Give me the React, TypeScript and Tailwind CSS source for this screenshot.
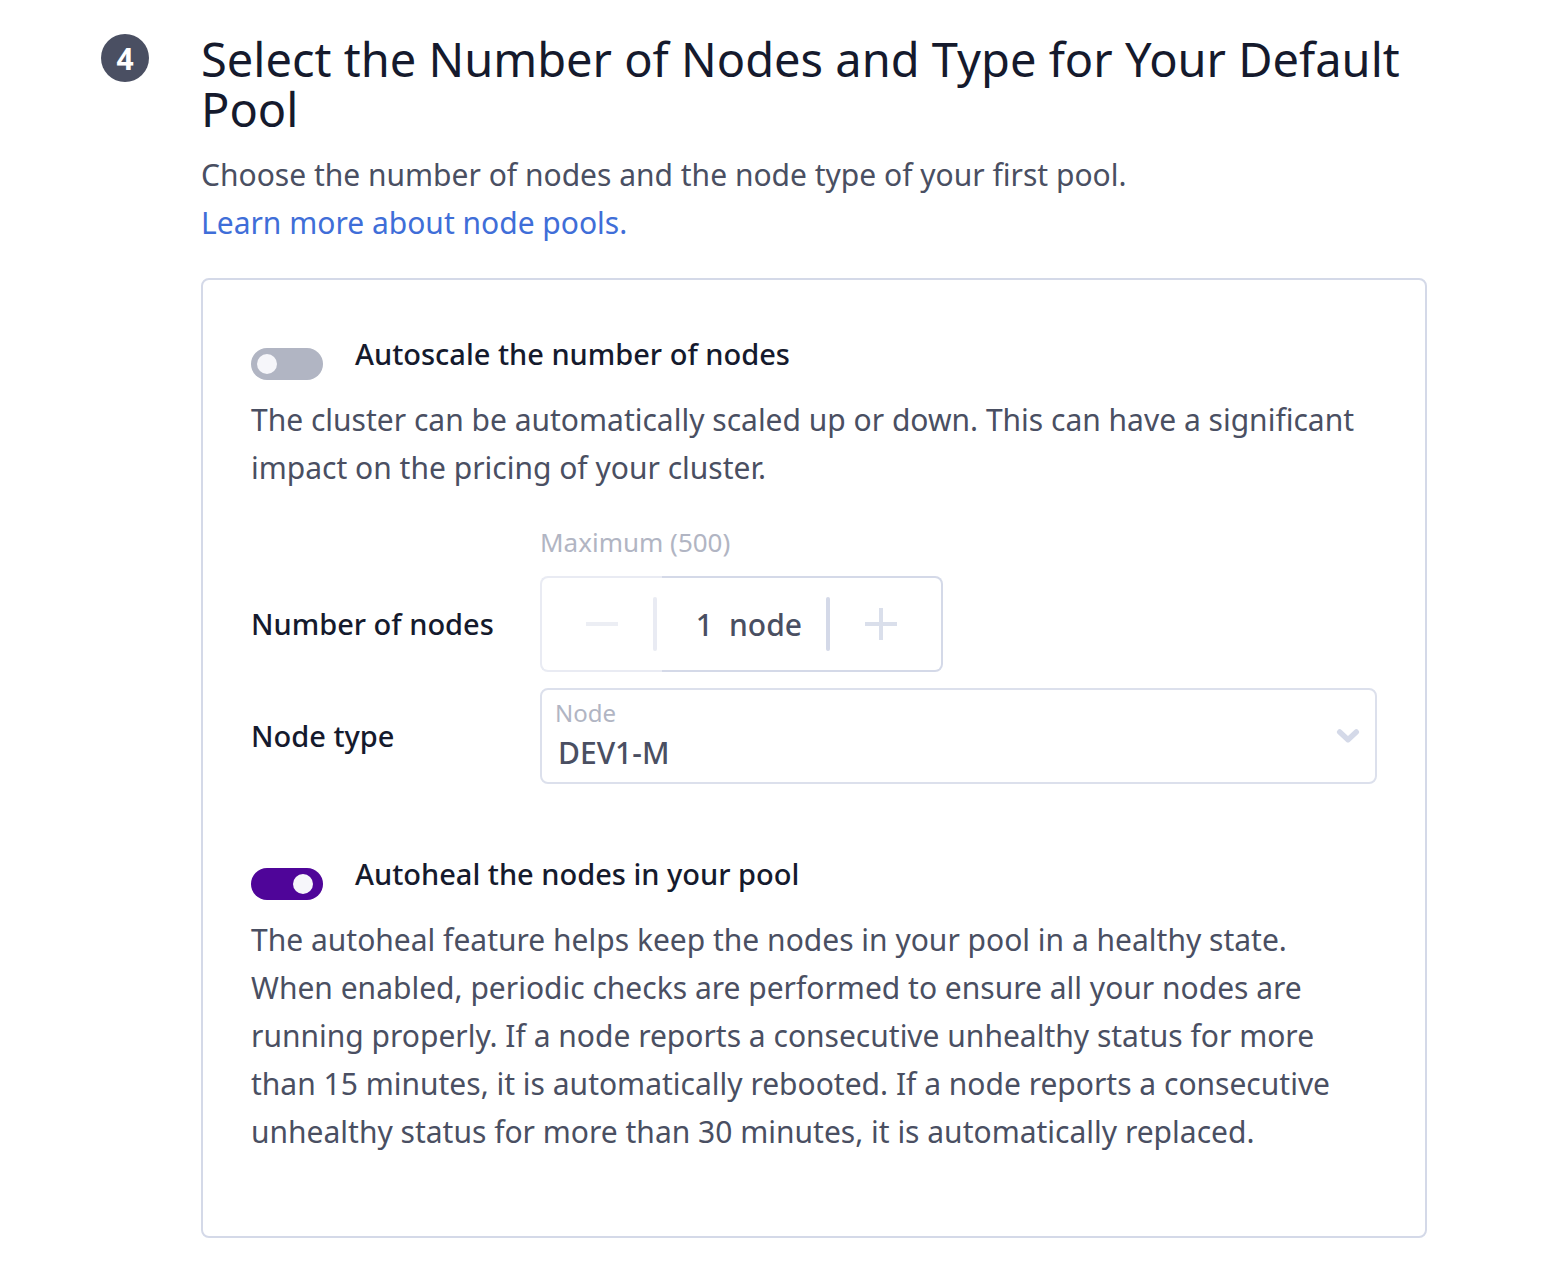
import { useState } from "react";

type ToggleProps = {
  id: string;
  label: string;
  description: string;
  checked: boolean;
  onChange: (checked: boolean) => void;
};

function ToggleField({ id, label, description, checked, onChange }: ToggleProps) {
  return (
    <div>
      <div className="flex items-start gap-8">
        <input
          id={id}
          type="checkbox"
          role="switch"
          checked={checked}
          onChange={(e) => onChange(e.target.checked)}
          aria-describedby={`${id}-description`}
          className="mt-[18px] flex h-8 w-[72px] shrink-0 cursor-pointer appearance-none items-center rounded-full bg-[#b1b5c3] px-1.5 before:size-5 before:rounded-full before:bg-[#f6f6fa] checked:justify-end checked:bg-[#4f0599] checked:px-2.5"
        />
        <label htmlFor={id} className="cursor-pointer text-[29px] font-medium leading-[48px] text-[#151a2d]">
          {label}
        </label>
      </div>
      <p id={`${id}-description`} className="mt-4 pr-4 leading-[48px]">
        {description}
      </p>
    </div>
  );
}

function NodeStepper() {
  const [count, setCount] = useState(1);
  const atMinimum = count <= 1;
  return (
    <div className="flex h-24 w-[403px] max-w-full">
      <button
        type="button"
        aria-label="Remove a node"
        disabled={atMinimum}
        onClick={() => setCount(count - 1)}
        className="flex w-[122px] shrink-0 items-center justify-end rounded-l-lg border-y-2 border-l-2 border-[#d4d9e8] pr-[5px] disabled:opacity-50"
      >
        <svg viewBox="0 0 34 34" className="mr-[34px] size-[34px]" fill="#dadfeb" aria-hidden="true">
          <rect x="1" y="15" width="32" height="4" />
        </svg>
        <span className="h-[54px] w-1 rounded-xs bg-[#d4d9e8]" />
      </button>
      <div className="flex min-w-0 flex-1 items-center rounded-r-lg border-y-2 border-r-2 border-[#d4d9e8]">
        <div className="flex min-w-0 flex-1 items-center justify-end gap-4 pr-6 font-medium">
          <input
            id="node-count"
            type="text"
            inputMode="numeric"
            value={count}
            onChange={(e) => setCount(Math.min(500, Math.max(1, Number(e.target.value) || 1)))}
            className="w-13 min-w-0 bg-transparent text-right outline-none"
          />
          <span>node</span>
        </div>
        <span className="h-[54px] w-1 rounded-xs bg-[#d4d9e8]" />
        <button
          type="button"
          aria-label="Add a node"
          onClick={() => setCount(Math.min(500, count + 1))}
          className="flex h-full w-[111px] shrink-0 items-center pl-[34px]"
        >
          <svg viewBox="0 0 34 34" className="size-[34px]" fill="#dadfeb" aria-hidden="true">
            <path d="M1 15h14V1h4v14h14v4H19v14h-4V19H1z" />
          </svg>
        </button>
      </div>
    </div>
  );
}

export default function App() {
  const [autoscale, setAutoscale] = useState(false);
  const [autoheal, setAutoheal] = useState(true);

  return (
    <main className="flex items-start gap-[52px] bg-white pt-[34px] pr-[125px] pb-7 pl-[101px] font-['Noto_Sans',sans-serif] text-[30px] text-[#4a4f62]">
      <div className="flex size-12 shrink-0 items-center justify-center rounded-full bg-[#4a4f62] text-[30px] font-bold text-white">
        4
      </div>
      <section className="min-w-0 flex-1">
        <h1 className="text-[47px] leading-[50px] text-[#151a2d]">
          Select the Number of Nodes and Type for Your Default Pool
        </h1>
        <div className="mt-[17px] leading-[48px]">
          <p>Choose the number of nodes and the node type of your first pool.</p>
          <a href="#node-pools" className="block text-[#3f6ed8]">
            Learn more about node pools.
          </a>
        </div>

        <div className="mt-[31px] rounded-lg border-2 border-[#d4d9e8] px-12 pt-[50px] pb-20">
          <ToggleField
            id="autoscale"
            label="Autoscale the number of nodes"
            description="The cluster can be automatically scaled up or down. This can have a significant impact on the pricing of your cluster."
            checked={autoscale}
            onChange={setAutoscale}
          />

          <div className="mt-[30px] grid grid-cols-[289px_1fr] items-center">
            <p className="col-start-2 mb-3.5 text-[26px] leading-10 text-[#b1b5c3]">Maximum (500)</p>
            <label htmlFor="node-count" className="text-[29px] font-medium text-[#151a2d]">
              Number of nodes
            </label>
            <NodeStepper />
            <label htmlFor="node-type" className="mt-4 text-[29px] font-medium text-[#151a2d]">
              Node type
            </label>
            <div className="relative mt-4">
              <span className="pointer-events-none absolute top-[9px] left-[15px] text-2xl text-[#b1b5c3]">
                Node
              </span>
              <select
                id="node-type"
                className="h-24 w-full appearance-none rounded-lg border-2 border-[#dce0ec] bg-transparent px-4 pt-8 font-medium outline-none"
              >
                <option>DEV1-M</option>
              </select>
              <svg
                viewBox="0 0 24 16"
                className="pointer-events-none absolute top-10 right-[17px] h-4 w-6"
                fill="none"
                stroke="#d4d9e8"
                strokeWidth="5.500"
                strokeLinecap="round"
                strokeLinejoin="round"
                aria-hidden="true"
              >
                <path d="M3.700 4 12 11.700 20.300 4" />
              </svg>
            </div>
          </div>

          <div className="mt-[66px]">
            <ToggleField
              id="autoheal"
              label="Autoheal the nodes in your pool"
              description="The autoheal feature helps keep the nodes in your pool in a healthy state. When enabled, periodic checks are performed to ensure all your nodes are running properly. If a node reports a consecutive unhealthy status for more than 15 minutes, it is automatically rebooted. If a node reports a consecutive unhealthy status for more than 30 minutes, it is automatically replaced."
              checked={autoheal}
              onChange={setAutoheal}
            />
          </div>
        </div>
      </section>
    </main>
  );
}
